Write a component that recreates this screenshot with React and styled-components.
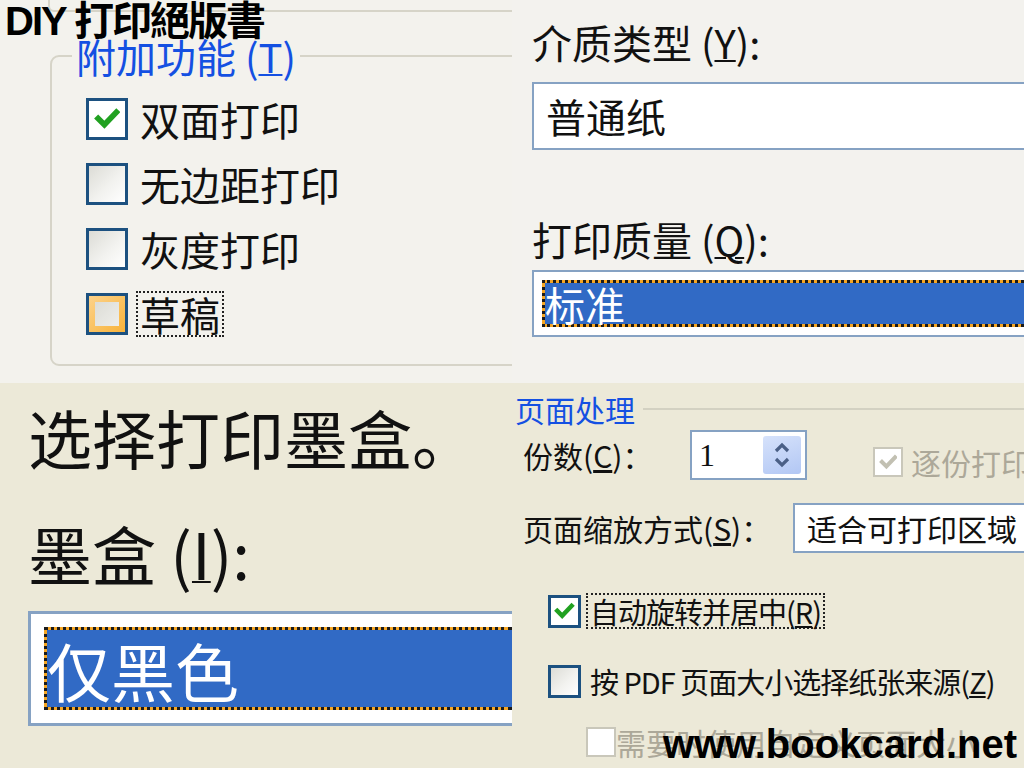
import styled, { createGlobalStyle } from 'styled-components';

const GlobalStyle = createGlobalStyle`
  html, body {
    margin: 0;
    padding: 0;
    background: #ece9d8;
    overflow: hidden;
  }
  body {
    font-family: "Noto Sans CJK SC", "Noto Sans", sans-serif;
    color: #111;
  }
`;

const cjk = `"Noto Sans CJK SC", "Noto Sans", sans-serif`;

function CheckBox({ size = 42, variant = 'plain' }) {
  return (
    <Box $size={size} $variant={variant}>
      {variant === 'hot' && <HotCore />}
      {(variant === 'checked' || variant === 'disabledChecked') && (
        <svg width={size * 0.62} height={size * 0.62} viewBox="0 0 10 10">
          <path
            d="M1.6 4.8 L4 7.2 L8.6 2.4"
            fill="none"
            stroke={variant === 'checked' ? '#21a121' : '#c2c0b2'}
            strokeWidth="2.2"
            strokeLinecap="square"
          />
        </svg>
      )}
    </Box>
  );
}

export default function App() {
  return (
    <>
      <GlobalStyle />
      <Collage>
        <Panel $bg="#f3f2ed">
          <Title>DIY 打印絕版書</Title>
          <UpperCorner />
          <Group>
            <GroupLegend>
              附加功能 (<u>T</u>)
            </GroupLegend>
            <CheckList>
              <CheckRow>
                <CheckBox variant="checked" />
                <CheckText>双面打印</CheckText>
              </CheckRow>
              <CheckRow>
                <CheckBox />
                <CheckText>无边距打印</CheckText>
              </CheckRow>
              <CheckRow>
                <CheckBox />
                <CheckText>灰度打印</CheckText>
              </CheckRow>
              <CheckRow>
                <CheckBox variant="hot" />
                <CheckText $focus>草稿</CheckText>
              </CheckRow>
            </CheckList>
          </Group>
        </Panel>

        <Panel $bg="#f3f2ee" $pad="22px 0 0 20px">
          <FieldLabel $size={40}>
            介质类型 (<u>Y</u>):
          </FieldLabel>
          <TextBox $top={20} $height={68} $size={40}>
            普通纸
          </TextBox>
          <FieldLabel $size={40} $top={69}>
            打印质量 (<u>Q</u>):
          </FieldLabel>
          <ListBox $top={11} $height={67} $inset={8}>
            <Selected $size={40}>标准</Selected>
          </ListBox>
        </Panel>

        <Panel $bg="#ece9d8" $pad="18px 0 0 28px">
          <FieldLabel $size={64} $line={70}>
            选择打印墨盒。
          </FieldLabel>
          <FieldLabel $size={64} $line={70} $top={46}>
            墨盒 (<u>I</u>):
          </FieldLabel>
          <ListBox $top={24} $height={115} $inset={13} $border={3}>
            <Selected $size={64}>仅黑色</Selected>
          </ListBox>
        </Panel>

        <Panel $bg="#ece9d8" $pad="10px 0 0 3px">
          <SectionHead>
            <SectionTitle>页面处理</SectionTitle>
            <SectionLine />
          </SectionHead>
          <FormRow $top={5} $indent={8}>
            <RowLabel $width={167}>
              份数(<u>C</u>)：
            </RowLabel>
            <SpinBox>
              <SpinValue>1</SpinValue>
              <SpinButton>
                <svg width="22" height="30" viewBox="0 0 22 30">
                  <path d="M5 11 L11 5 L17 11" fill="none" stroke="#4a5f86" strokeWidth="3.2" />
                  <path d="M5 19 L11 25 L17 19" fill="none" stroke="#4a5f86" strokeWidth="3.2" />
                </svg>
              </SpinButton>
            </SpinBox>
            <DisabledOption $left={66}>
              <CheckBox size={30} variant="disabledChecked" />
              <DimText>逐份打印</DimText>
            </DisabledOption>
          </FormRow>
          <FormRow $top={23} $indent={8}>
            <RowLabel $width={270}>
              页面缩放方式(<u>S</u>)：
            </RowLabel>
            <TextBox $height={50} $size={30} $grow>
              适合可打印区域
            </TextBox>
          </FormRow>
          <FormRow $top={40} $indent={33}>
            <CheckBox size={33} variant="checked" />
            <OptionText $focus>
              自动旋转并居中(<u>R</u>)
            </OptionText>
          </FormRow>
          <FormRow $top={34} $indent={33}>
            <CheckBox size={33} />
            <OptionText>
              按 PDF 页面大小选择纸张来源(<u>Z</u>)
            </OptionText>
          </FormRow>
          <FormRow $top={26} $indent={71}>
            <CheckBox size={30} variant="disabled" />
            <DimText>需要时使用自定义页面大小</DimText>
          </FormRow>
          <Watermark>www.bookcard.net</Watermark>
        </Panel>
      </Collage>
    </>
  );
}

const Collage = styled.main`
  display: grid;
  grid-template-columns: 512px 512px;
  grid-template-rows: 383px 385px;
  width: 1024px;
  height: 768px;
  overflow: hidden;
`;

const Panel = styled.section`
  position: relative;
  overflow: hidden;
  background: ${(p) => p.$bg};
  padding: ${(p) => p.$pad || '0'};
  display: flex;
  flex-direction: column;
  align-items: flex-start;
  font-family: ${cjk};
`;

const Title = styled.h1`
  position: absolute;
  top: 0;
  left: 5px;
  margin: 0;
  z-index: 2;
  font-family: "Liberation Sans", "Noto Sans CJK TC", sans-serif;
  font-weight: 700;
  font-size: 40px;
  line-height: 42px;
  letter-spacing: -2px;
  color: #000;
`;

const UpperCorner = styled.div`
  align-self: stretch;
  margin-left: 48px;
  height: 10px;
  border-left: 2px solid #d6d4c8;
  border-bottom: 2px solid #d6d4c8;
  border-bottom-left-radius: 6px;
`;

const Group = styled.fieldset`
  margin: 23px 0 0 50px;
  padding: 0;
  width: 520px;
  border: 2px solid #d6d4c8;
  border-radius: 9px;
  box-sizing: border-box;
`;

const GroupLegend = styled.legend`
  margin-left: 20px;
  padding: 0 4px;
  font-size: 40px;
  line-height: 42px;
  color: #1450e2;

  u {
    text-decoration-thickness: 2px;
  }
`;

const CheckList = styled.div`
  display: flex;
  flex-direction: column;
  gap: 23px;
  padding: 21px 0 29px 34px;
`;

const CheckRow = styled.div`
  display: flex;
  align-items: center;
  gap: 8px;
  height: 42px;
`;

const Box = styled.span`
  flex: none;
  display: flex;
  align-items: center;
  justify-content: center;
  box-sizing: border-box;
  width: ${(p) => p.$size}px;
  height: ${(p) => p.$size}px;
  border: ${(p) => (p.$size > 32 ? 3 : 2)}px solid
    ${(p) => (p.$variant.startsWith('disabled') ? '#c9c7ba' : '#1c5180')};
  background: ${(p) =>
    p.$variant === 'plain'
      ? 'linear-gradient(135deg, #dcdcd6 0%, #f2f2ef 55%, #ffffff 100%)'
      : p.$variant === 'hot'
        ? 'linear-gradient(135deg, #fcd28a, #f8b33a)'
        : '#ffffff'};
  padding: ${(p) => (p.$variant === 'hot' ? '6px' : '0')};
`;

const HotCore = styled.span`
  flex: 1;
  align-self: stretch;
  background: linear-gradient(135deg, #dcdcd6, #eeeeea);
`;

const CheckText = styled.span`
  font-size: 40px;
  line-height: 42px;
  padding: 0 2px;
  border: 2px dotted ${(p) => (p.$focus ? '#222' : 'transparent')};
`;

const FieldLabel = styled.div`
  margin-top: ${(p) => p.$top || 0}px;
  font-size: ${(p) => p.$size}px;
  line-height: ${(p) => p.$line || p.$size}px;
  color: #111;
  white-space: nowrap;

  u {
    text-decoration-thickness: 2px;
  }
`;

const TextBox = styled.div`
  margin-top: ${(p) => p.$top || 0}px;
  box-sizing: border-box;
  height: ${(p) => p.$height}px;
  ${(p) => (p.$grow ? 'flex: 1;' : 'align-self: stretch;')}
  display: flex;
  align-items: center;
  padding-left: 12px;
  border: 2px solid #86a2c3;
  border-right: none;
  background: #fff;
  font-size: ${(p) => p.$size}px;
  line-height: 1;
  white-space: nowrap;
  color: #111;
`;

const ListBox = styled.div`
  margin-top: ${(p) => p.$top || 0}px;
  align-self: stretch;
  box-sizing: border-box;
  height: ${(p) => p.$height}px;
  display: flex;
  padding: ${(p) => p.$inset}px 0 ${(p) => p.$inset}px ${(p) => p.$inset}px;
  border: ${(p) => p.$border || 2}px solid #86a2c3;
  border-right: none;
  background: #fff;
`;

const Selected = styled.div`
  flex: 1;
  display: flex;
  align-items: center;
  border: 3px dotted #1b1b1b;
  border-right: none;
  background:
    linear-gradient(#316ac5, #316ac5) padding-box,
    #f6a623 border-box;
  color: #fff;
  font-size: ${(p) => p.$size}px;
  line-height: 1;
`;

const SectionHead = styled.div`
  align-self: stretch;
  display: flex;
  align-items: center;
  gap: 8px;
`;

const SectionTitle = styled.span`
  font-size: 30px;
  line-height: 32px;
  color: #1450e2;
`;

const SectionLine = styled.span`
  flex: 1;
  height: 2px;
  background: #d3d1c2;
`;

const FormRow = styled.div`
  align-self: stretch;
  display: flex;
  align-items: center;
  margin-top: ${(p) => p.$top}px;
  padding-left: ${(p) => p.$indent}px;
`;

const RowLabel = styled.span`
  flex: none;
  width: ${(p) => p.$width}px;
  font-size: 30px;
  line-height: 34px;
  color: #111;
  white-space: nowrap;
`;

const SpinBox = styled.div`
  flex: none;
  box-sizing: border-box;
  width: 117px;
  height: 50px;
  display: flex;
  align-items: center;
  padding: 4px;
  border: 2px solid #86a2c3;
  background: #fff;
`;

const SpinValue = styled.span`
  flex: 1;
  padding-left: 3px;
  font-family: "Liberation Serif", serif;
  font-size: 32px;
  color: #111;
`;

const SpinButton = styled.span`
  width: 38px;
  align-self: stretch;
  display: flex;
  align-items: center;
  justify-content: center;
  border-radius: 3px;
  background: linear-gradient(160deg, #d6e2fb, #b2c7f4);
`;

const DisabledOption = styled.div`
  display: flex;
  align-items: center;
  gap: 8px;
  margin-left: ${(p) => p.$left}px;
  margin-top: 14px;
`;

const DimText = styled.span`
  font-size: 30px;
  line-height: 34px;
  color: #aca899;
  white-space: nowrap;
`;

const OptionText = styled.span`
  margin-left: 5px;
  padding: 0 2px;
  font-size: 29px;
  line-height: 32px;
  letter-spacing: -1px;
  color: #111;
  white-space: nowrap;
  border: 2px dotted ${(p) => (p.$focus ? '#222' : 'transparent')};
`;

const Watermark = styled.div`
  position: absolute;
  right: 7px;
  bottom: 4px;
  z-index: 2;
  font-family: "Liberation Sans", sans-serif;
  font-weight: 700;
  font-size: 40px;
  line-height: 40px;
  color: #000;
`;
